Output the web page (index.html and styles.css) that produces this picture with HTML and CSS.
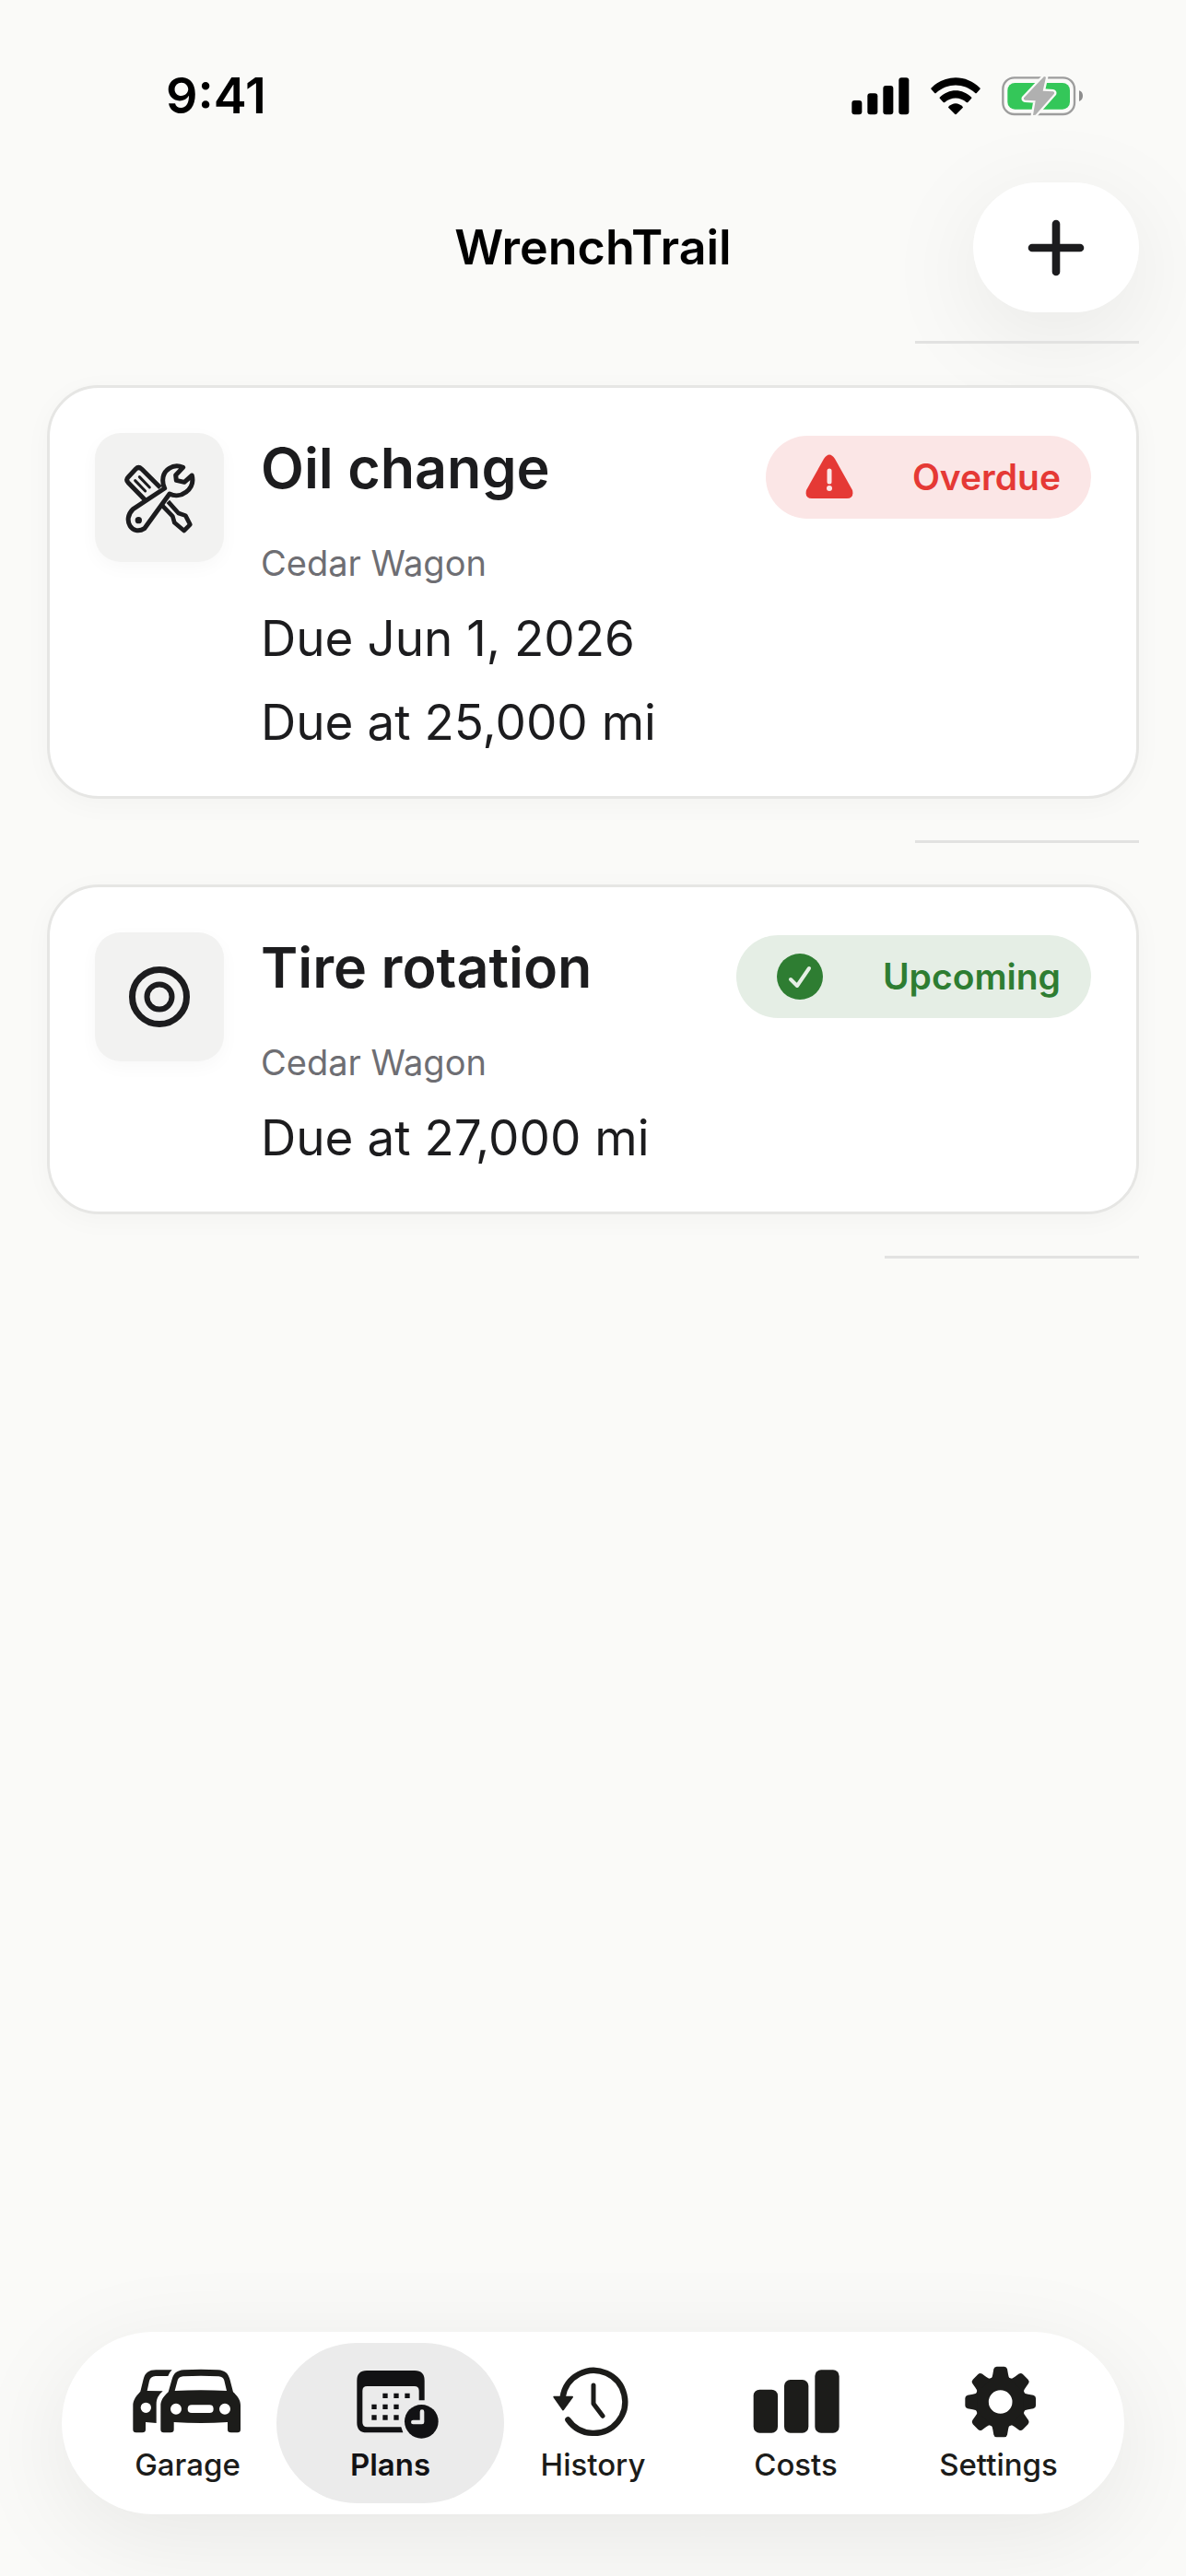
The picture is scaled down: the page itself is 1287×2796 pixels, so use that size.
FILE: index.html
```html
<!DOCTYPE html>
<html lang="en">
<head>
  <meta charset="UTF-8">
  <meta name="viewport" content="width=device-width, initial-scale=1">
  <title>WrenchTrail</title>
  <link rel="stylesheet" href="styles.css">
</head>
<body>
  <div class="status-bar">
    <span class="time">9:41</span>
    <div class="status-icons">
      <svg width="63" height="43" viewBox="188 128 189 129" aria-hidden="true">
        <rect x="189" y="206" width="33" height="46" rx="9"/>
        <rect x="240" y="183" width="33" height="69" rx="9"/>
        <rect x="291" y="158" width="33" height="94" rx="9"/>
        <rect x="342" y="132" width="33" height="120" rx="9"/>
      </svg>
      <svg width="54" height="43" viewBox="446 128 162 129" aria-hidden="true">
        <path d="M447 166C492 120 562 120 607 166Q608 168 606 170L596 181Q593 184 590 181C554 148 500 148 464 181Q461 184 458 181L448 170Q446 168 447 166Z"/>
        <path d="M475 196C505 166 549 166 579 196Q580 198 578 200L567 212Q565 214 562 212C542 194 512 194 492 212Q489 214 487 212L476 200Q474 198 475 196Z"/>
        <path d="M504 226C518 212 536 212 550 226Q552 228 550 230L529 251Q527 252 525 251L504 230Q502 228 504 226Z"/>
      </svg>
      <svg width="88" height="43" viewBox="678 128 264 129" aria-hidden="true">
        <rect x="682" y="132" width="233" height="119" rx="37" fill="none" stroke="#9d9d9d" stroke-width="7"/>
        <path d="M930 174Q942 178 942 191Q942 205 930 209Z" fill="#8d8d8d"/>
        <rect x="697" y="149" width="203" height="86" rx="24" fill="#34c759"/>
        <path d="M816 128L750 198Q748 204 754 205L788 207L780 254L788 253L849 184Q851 178 845 177L812 175L822 130Z" fill="#b0b0b0" stroke="#fafaf8" stroke-width="14" stroke-linejoin="round"/>
        <path d="M816 128L750 198Q748 204 754 205L788 207L780 254L788 253L849 184Q851 178 845 177L812 175L822 130Z" fill="#b0b0b0"/>
      </svg>
    </div>
  </div>

  <header class="nav-header">
    <h1>WrenchTrail</h1>
    <button class="add-button" type="button" aria-label="Add plan">
      <svg width="62" height="62" viewBox="0 0 62 62" fill="none" stroke="currentColor" stroke-width="8.6" stroke-linecap="round">
        <path d="M31 5V57M5 31H57"/>
      </svg>
    </button>
  </header>

  <main>
    <ul class="plans">
      <li class="separator" role="presentation"></li>
      <li class="plan">
        <div class="tile">
          <svg width="80" height="80" viewBox="37 32 240 240" fill="none" stroke="currentColor" stroke-width="15" stroke-linejoin="round" aria-hidden="true">
            <path d="M112 162L55 103Q47 94 55 86L80 59Q89 50 99 59L160 120"/>
            <path d="M78 97L111 131M92 85L125 119" stroke-width="9" stroke-linecap="round"/>
            <path d="M166 178L200 213L206 234L237 260L257 240L242 211L219 203L185 165" stroke-width="14"/>
            <path d="M234 54C202 40 168 62 168 96Q168 112 174 122L71 190C34 226 70 278 108 253L190 140C226 158 274 126 263 80L238 102L212 96L210 79Z"/>
            <circle cx="89" cy="226" r="11" fill="currentColor" stroke="none"/>
          </svg>
        </div>
        <div class="details">
          <div class="title-row">
            <h2>Oil change</h2>
            <span class="badge overdue">
              <svg width="72" height="52" viewBox="0 0 72 52" aria-hidden="true">
                <path d="M30 6Q36 -3 42 6L61 40Q63 49 55 49H17Q9 49 11 40Z" fill="currentColor"/>
                <path d="M36 19V31" stroke="#fbe6e6" stroke-width="5" stroke-linecap="round"/>
                <circle cx="36" cy="38" r="3" fill="#fbe6e6"/>
              </svg>
              Overdue
            </span>
          </div>
          <p class="vehicle">Cedar Wagon</p>
          <p>Due Jun 1, 2026</p>
          <p>Due at 25,000 mi</p>
        </div>
      </li>
      <li class="separator" role="presentation"></li>
      <li class="plan">
        <div class="tile">
          <svg width="80" height="80" viewBox="0 0 80 80" fill="none" stroke="currentColor" aria-hidden="true">
            <circle cx="40" cy="40" r="29.5" stroke-width="7"/>
            <circle cx="40" cy="40" r="13.5" stroke-width="6"/>
          </svg>
        </div>
        <div class="details">
          <div class="title-row">
            <h2>Tire rotation</h2>
            <span class="badge upcoming">
              <svg width="72" height="52" viewBox="0 0 72 52" aria-hidden="true">
                <circle cx="36" cy="26" r="25" fill="currentColor"/>
                <path d="M26 29L33 36L46 17" fill="none" stroke="#e5eee5" stroke-width="4" stroke-linecap="round" stroke-linejoin="round"/>
              </svg>
              Upcoming
            </span>
          </div>
          <p class="vehicle">Cedar Wagon</p>
          <p>Due at 27,000 mi</p>
        </div>
      </li>
      <li class="separator wide" role="presentation"></li>
    </ul>
  </main>

  <nav class="tab-bar">
    <a href="#garage" class="tab">
      <svg viewBox="297 205 390 237" fill="currentColor" aria-hidden="true">
        <path fill-rule="evenodd" d="M440 218H388C364 218 352 228 347 248L337 288C318 308 313 320 313 334V412Q313 422 323 422H343Q354 422 354 412V388L389 391V330C389 310 398 298 410 287L359 286L366 254Q370 239 386 238H427Q431 226 440 218ZM355 324A17 17 0 1 0 355 358A17 17 0 1 0 355 324Z"/>
        <path fill-rule="evenodd" d="M478 218Q534 215 590 218C612 220 622 228 628 248L639 290C658 308 663 320 663 334V412Q663 422 653 422H632Q621 422 621 412V388Q534 394 446 388V412Q446 422 435 422H413Q403 422 403 412V334C403 320 410 306 428 290L440 248C446 228 456 220 478 218ZM449 286Q534 281 618 286L610 252Q606 240 592 239Q534 235 476 239Q462 240 458 252ZM453 327A18 18 0 1 0 453 363A18 18 0 1 0 453 327ZM612 327A18 18 0 1 0 612 363A18 18 0 1 0 612 327ZM504 332Q491 332 491 345T504 358H562Q575 358 575 345T562 332Z"/>
      </svg>
      <span>Garage</span>
    </a>
    <a href="#plans" class="tab active" aria-current="page">
      <svg viewBox="-125 205 390 237" fill="currentColor" aria-hidden="true">
        <path d="M-8 220H148Q180 220 180 252V317H162V286Q162 271 147 271H-7Q-22 271 -22 286V389Q-22 404 -7 404H104L110 422H-8Q-40 422 -40 390V252Q-40 220 -8 220Z"/>
        <path d="M44 294h16v16h-16zM80 294h16v16h-16zM116 294h16v16h-16zM8 330h16v16h-16zM44 330h16v16h-16zM80 330h16v16h-16zM8 365h16v16h-16zM44 365h16v16h-16zM80 365h16v16h-16z"/>
        <circle cx="170" cy="386" r="55"/>
        <path d="M172 354V388H143" fill="none" stroke="#ebebeb" stroke-width="14" stroke-linecap="round" stroke-linejoin="round"/>
      </svg>
      <span>Plans</span>
    </a>
    <a href="#history" class="tab">
      <svg viewBox="536 205 390 237" fill="none" stroke="currentColor" stroke-width="19" stroke-linecap="round" stroke-linejoin="round" aria-hidden="true">
        <path d="M631 306A102 102 0 1 1 648 380"/>
        <path d="M731 268V328L761 368" stroke-width="15"/>
        <path d="M603 306H662L632 347Z" fill="currentColor" stroke-width="6"/>
      </svg>
      <span>History</span>
    </a>
    <a href="#costs" class="tab">
      <svg viewBox="55 205 390 237" fill="currentColor" aria-hidden="true">
        <rect x="111" y="282" width="79" height="141" rx="20"/>
        <rect x="211" y="250" width="79" height="173" rx="20"/>
        <rect x="311" y="218" width="79" height="205" rx="20"/>
      </svg>
      <span>Costs</span>
    </a>
    <a href="#settings" class="tab">
      <svg viewBox="716 205 390 237" fill="currentColor" aria-hidden="true">
        <circle cx="916" cy="322" r="61" fill="none" stroke="currentColor" stroke-width="45"/>
        <g id="teeth">
          <path id="tooth" d="M885 247Q890 242 891 232L894 215Q896 207 904 207H928Q936 207 938 215L941 232Q942 242 947 247Z"/>
          <use href="#tooth" transform="rotate(45 916 322)"/>
          <use href="#tooth" transform="rotate(90 916 322)"/>
          <use href="#tooth" transform="rotate(135 916 322)"/>
        </g>
        <use href="#teeth" transform="rotate(180 916 322)"/>
      </svg>
      <span>Settings</span>
    </a>
  </nav>
</body>
</html>
```
FILE: styles.css
```css
* {
  box-sizing: border-box;
}
body {
  margin: 0;
  min-height: 100vh;
  display: flex;
  flex-direction: column;
  background: #fafaf8;
  color: #1c1c1e;
  font-family: Inter, "Liberation Sans", sans-serif;
}
h1, h2, p, ul {
  margin: 0;
  padding: 0;
}
svg {
  display: block;
  flex: none;
}

/* status bar */
.status-bar {
  display: flex;
  justify-content: space-between;
  align-items: center;
  padding: 74px 112px 0 180px;
  color: #000;
}
.time {
  font-size: 54px;
  line-height: 60px;
  font-weight: 600;
}
.status-icons {
  display: flex;
  gap: 23px;
}

/* header */
.nav-header {
  display: grid;
  grid-template-columns: 1fr auto 1fr;
  align-items: center;
  padding: 64px 51px 31px;
}
.nav-header h1 {
  grid-column: 2;
  color: #000;
  font-size: 52px;
  line-height: 60px;
  font-weight: 600;
}
.add-button {
  justify-self: end;
  display: flex;
  align-items: center;
  justify-content: center;
  width: 180px;
  height: 141px;
  padding: 0;
  border: none;
  border-radius: 72px;
  background: #fff;
  color: #1c1c1e;
  box-shadow: 0 24px 110px rgba(0, 0, 0, 0.08);
  cursor: pointer;
}

/* plan list */
main {
  flex: 1;
  padding: 0 51px;
}
.plans {
  list-style: none;
}
.separator {
  width: 243px;
  height: 3px;
  margin-left: auto;
  background: #e2e2e1;
}
.separator.wide {
  width: 276px;
}
.plan {
  display: flex;
  align-items: flex-start;
  gap: 40px;
  margin: 45px 0;
  padding: 49px 49px 46px;
  border: 3px solid #e6e6e4;
  border-radius: 56px;
  background: #fff;
  box-shadow: 0 6px 30px rgba(0, 0, 0, 0.03);
}
.tile {
  display: flex;
  align-items: center;
  justify-content: center;
  width: 140px;
  height: 140px;
  border-radius: 28px;
  background: #f2f2f1;
  box-shadow: 0 6px 20px rgba(0, 0, 0, 0.03);
}
.details {
  flex: 1;
  display: flex;
  flex-direction: column;
  gap: 23px;
}
.title-row {
  display: flex;
  justify-content: space-between;
  align-items: flex-start;
}
.title-row h2 {
  font-size: 61px;
  line-height: 77px;
  font-weight: 600;
}
.details p {
  font-size: 53px;
  line-height: 68px;
}
.details .vehicle {
  color: #6e6e73;
  font-size: 38px;
  line-height: 50px;
}
.badge {
  display: flex;
  align-items: center;
  gap: 54px;
  height: 90px;
  margin-top: 3px;
  padding: 0 33px;
  border-radius: 45px;
  font-size: 39px;
  line-height: 48px;
  font-weight: 600;
}
.overdue {
  background: #fbe6e6;
  color: #e53935;
}
.upcoming {
  background: #e5eee5;
  color: #2e7d32;
}

/* bottom tabs */
.tab-bar {
  display: flex;
  margin: 0 67px 67px;
  padding: 12px 13px;
  border-radius: 99px;
  background: #fff;
  box-shadow: 0 24px 110px rgba(0, 0, 0, 0.08);
}
.tab {
  flex: 1;
  display: flex;
  flex-direction: column;
  align-items: center;
  padding: 25px 0 22px;
  border-radius: 87px;
  color: #1c1c1a;
  font-size: 33px;
  line-height: 40px;
  font-weight: 500;
  text-decoration: none;
}
.tab + .tab {
  margin-left: -27px;
}
.tab svg {
  width: 130px;
  height: 79px;
  margin-bottom: 8px;
  overflow: visible;
}
.tab.active {
  background: #ebebeb;
  color: #121214;
  font-weight: 600;
}
```
